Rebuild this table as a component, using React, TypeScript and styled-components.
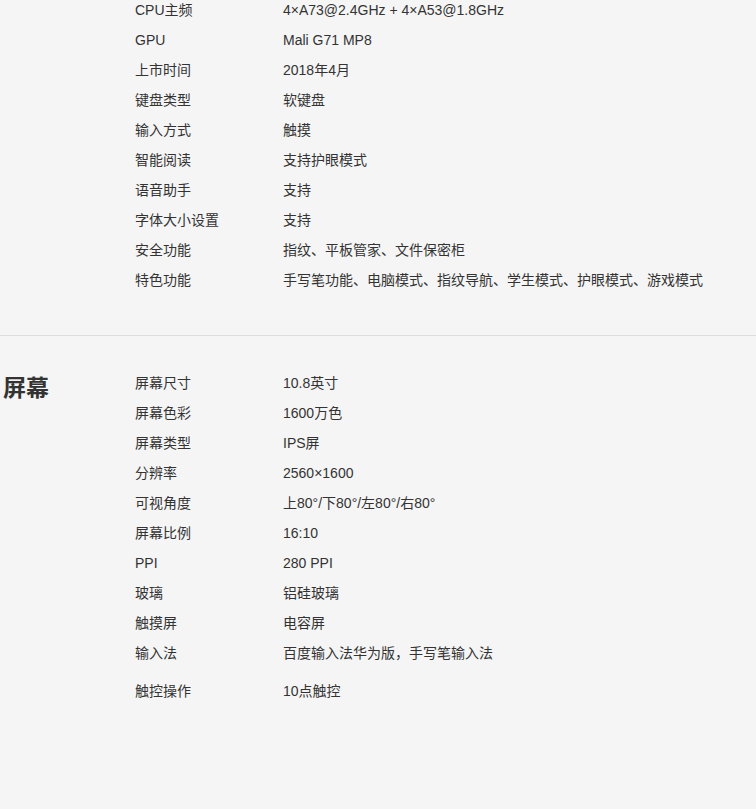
import React from "react";
import styled, { createGlobalStyle } from "styled-components";

const Global = createGlobalStyle`
  html, body { margin: 0; padding: 0; background: #f5f5f5; }
  body { font-family: "Liberation Sans", "Noto Sans CJK SC", sans-serif; color: #333; overflow: hidden; }
`;

const Page = styled.div`
  margin-top: -5px;
  width: 756px;
`;

const Section = styled.section<{ $pt: number; $pb: number; $border?: boolean }>`
  display: flex;
  padding-top: ${(p) => p.$pt}px;
  padding-bottom: ${(p) => p.$pb}px;
  border-bottom: ${(p) => (p.$border ? "1px solid #dddddd" : "none")};
`;

const Heading = styled.h2`
  width: 132px;
  margin: 0;
  padding-left: 3px;
  font-size: 23px;
  font-weight: bold;
  line-height: 40px;
  color: #333;
  flex: none;
`;

const List = styled.dl`
  margin: 0;
  display: flex;
  flex-direction: column;
`;

const Row = styled.div<{ $mt?: number }>`
  display: flex;
  height: 30px;
  align-items: center;
  font-size: 14px;
  line-height: 20px;
  margin-top: ${(p) => p.$mt ?? 0}px;
`;

const Label = styled.dt`
  width: 148px;
  flex: none;
  color: #333;
`;

const Value = styled.dd`
  margin: 0;
  color: #333;
  white-space: nowrap;
`;

const top: [string, string][] = [
  ["CPU主频", "4×A73@2.4GHz + 4×A53@1.8GHz"],
  ["GPU", "Mali G71 MP8"],
  ["上市时间", "2018年4月"],
  ["键盘类型", "软键盘"],
  ["输入方式", "触摸"],
  ["智能阅读", "支持护眼模式"],
  ["语音助手", "支持"],
  ["字体大小设置", "支持"],
  ["安全功能", "指纹、平板管家、文件保密柜"],
  ["特色功能", "手写笔功能、电脑模式、指纹导航、学生模式、护眼模式、游戏模式"],
];

const screen: [string, string][] = [
  ["屏幕尺寸", "10.8英寸"],
  ["屏幕色彩", "1600万色"],
  ["屏幕类型", "IPS屏"],
  ["分辨率", "2560×1600"],
  ["可视角度", "上80°/下80°/左80°/右80°"],
  ["屏幕比例", "16:10"],
  ["PPI", "280 PPI"],
  ["玻璃", "铝硅玻璃"],
  ["触摸屏", "电容屏"],
  ["输入法", "百度输入法华为版，手写笔输入法"],
  ["触控操作", "10点触控"],
];

export default function App() {
  return (
    <Page>
      <Global />
      <Section $pt={0} $pb={40} $border>
        <Heading as="div" />
        <List>
          {top.map(([l, v]) => (
            <Row key={l}>
              <Label>{l}</Label>
              <Value>{v}</Value>
            </Row>
          ))}
        </List>
      </Section>
      <Section $pt={32} $pb={80}>
        <Heading>屏幕</Heading>
        <List>
          {screen.map(([l, v], i) => (
            <Row key={l} $mt={i === screen.length - 1 ? 8 : 0}>
              <Label>{l}</Label>
              <Value>{v}</Value>
            </Row>
          ))}
        </List>
      </Section>
    </Page>
  );
}
